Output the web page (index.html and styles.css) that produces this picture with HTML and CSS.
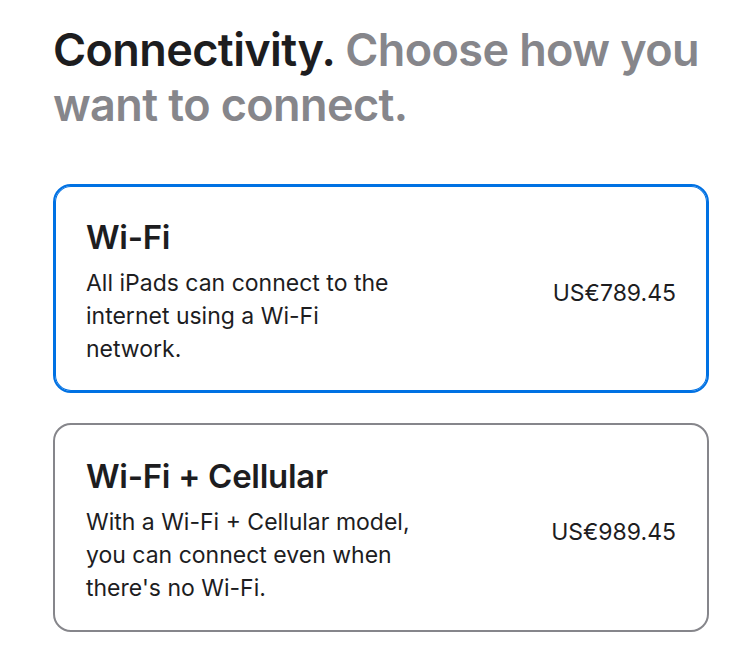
FILE: index.html
```html
<!DOCTYPE html>
<html lang="en">
<head>
<meta charset="utf-8">
<title>Connectivity</title>
<link rel="stylesheet" href="styles.css">
</head>
<body>
<main class="section">
  <h2 class="heading"><span class="heading-strong">Connectivity.</span> <span class="heading-muted">Choose how you want to connect.</span></h2>
  <div class="options">
    <div class="option selected">
      <div class="option-text">
        <div class="option-title">Wi-Fi</div>
        <p class="option-desc">All iPads can connect to the internet using a Wi-Fi network.</p>
      </div>
      <div class="option-price">US€789.45</div>
    </div>
    <div class="option">
      <div class="option-text">
        <div class="option-title">Wi-Fi + Cellular</div>
        <p class="option-desc">With a Wi-Fi + Cellular model, you can connect even when there's no Wi-Fi.</p>
      </div>
      <div class="option-price">US€989.45</div>
    </div>
  </div>
</main>
</body>
</html>
```
FILE: styles.css
```css
* { box-sizing: border-box; }
html, body { margin: 0; padding: 0; background: #fff; }
body {
  font-family: Inter, "Noto Sans", "Liberation Sans", sans-serif;
  color: #1d1d1f;
}
.section {
  width: 656px;
  margin-left: 53px;
  padding-top: 22px;
}
.heading {
  margin: 0;
  font-size: 45px;
  line-height: 55px;
  font-weight: 600;
  letter-spacing: -0.6px;
}
.heading-strong { color: #1d1d1f; }
.heading-muted { color: #86868b; }
.options {
  margin-top: 52px;
  display: flex;
  flex-direction: column;
  gap: 30px;
}
.option {
  height: 209px;
  border: 2px solid #86868b;
  border-radius: 18px;
  padding: 0 31px;
  display: flex;
  align-items: center;
  justify-content: space-between;
}
.option.selected {
  border-color: #0071e3;
  box-shadow: inset 0 0 0 1px #0071e3;
}
.option-text {
  width: 329px;
  padding-top: 7px;
}
.option-title {
  font-size: 33px;
  line-height: 38px;
  font-weight: 600;
  letter-spacing: -0.3px;
}
.option-desc {
  margin: 11px 0 0;
  font-size: 23px;
  line-height: 33px;
  font-weight: 400;
}
.option-price {
  margin-top: 10px;
  font-size: 23px;
  line-height: 33px;
  font-weight: 400;
}
```
